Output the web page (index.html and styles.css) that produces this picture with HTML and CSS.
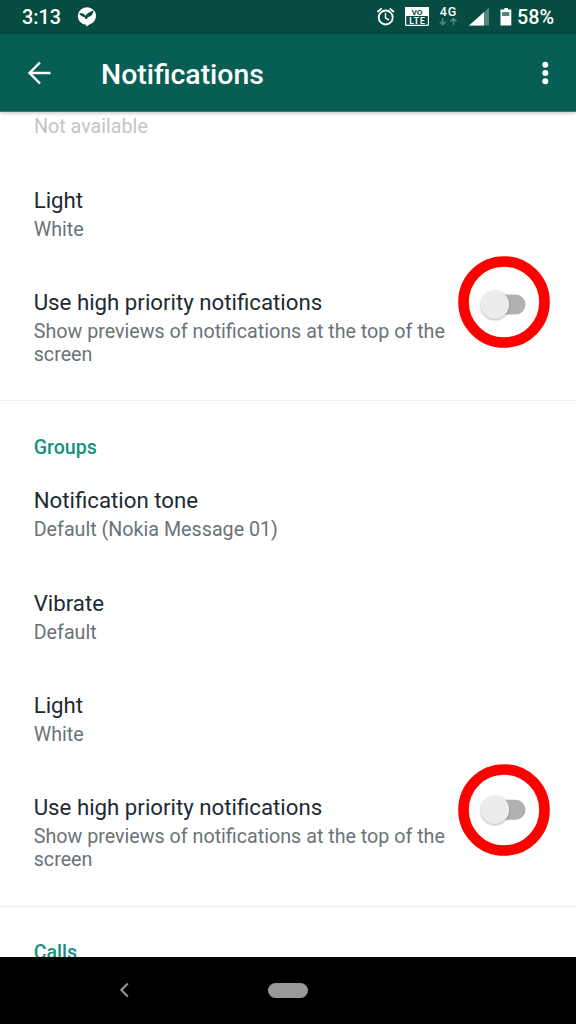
FILE: index.html
```html
<!DOCTYPE html>
<html lang="en">
<head>
<meta charset="utf-8">
<title>Notifications</title>
<link rel="stylesheet" href="styles.css">
</head>
<body>
<div class="screen">
  <header class="statusbar">
    <span class="clock">3:13</span>
    <svg class="bird" width="20" height="20" viewBox="0 0 20 20"><path fill="#fff" d="M9.700 0.300a9.100 8.700 0 0 1 3.500 16.800L9.700 19.500 8.500 17.600A9.100 8.700 0 0 1 9.700 .3z"/><path fill="#064c42" d="M2.300 6c3-.2 5 .9 6.200 2.700 1.500-2.300 4.200-4.100 8-5.200-.3 3.800-2.500 6-5 6.500-.9.300-1.300 1-1.500 1.900H8.300c-.1-1-.5-1.700-1.300-2C4.800 9.400 3 8.400 2.300 6z"/></svg>
    <svg class="icons" width="140" height="34" viewBox="0 0 140 34">
      <g fill="none" stroke="#fff" stroke-width="1.800"><circle cx="10.700" cy="17.500" r="7"/><path d="M10.500 13v5l3.700 2.200" stroke-width="1.500"/><path d="M2.400 12l4.300-3.600M14.700 8.400l4.300 3.600"/></g>
      <rect x="30.600" y="7.600" width="22.800" height="17.800" rx="1" fill="none" stroke="#fff" stroke-width="1.200"/>
      <path fill="#fff" d="M30 7h24v9H30z"/>
      <text class="tiny vo" x="42" y="14.800" textLength="11" lengthAdjust="spacingAndGlyphs">VO</text>
      <text class="tiny" x="42" y="24" textLength="15.500">LTE</text>
      <text class="network" x="73" y="16.300" textLength="16.500">4G</text>
      <path d="M67.700 18v6.500m-3-2.700 3 3 3-3M78.500 25.300v-6.500m-3 2.700 3-3 3 3" fill="none" stroke="#55857e" stroke-width="1.500"/>
      <path fill="#55857e" d="M114 7.800V25.500H94z"/><path fill="#fff" d="M109 12.200v13.300H94z"/>
      <path fill="#fff" d="M126 9.500h3.300V8h3.700v1.500h3.300V25.500H125.500V9.500z"/><path fill="#55857e" d="M127 12h7.300v4H127z"/>
    </svg>
    <span class="percent">58%</span>
  </header>
  <div class="toolbar">
    <svg width="24" height="24" viewBox="0 0 24 24"><path d="M23.500 12H2.500M13 1.500 2.500 12l10.500 10.500" fill="none" stroke="#fff" stroke-width="2.400"/></svg>
    <h1 class="heading">Notifications</h1>
    <svg class="more" width="8" height="24" viewBox="0 0 8 24" fill="#fff"><circle cx="4.300" cy="3.700" r="3"/><circle cx="4.300" cy="12" r="3"/><circle cx="4.300" cy="20.300" r="3"/></svg>
  </div>
  <main class="settings">
    <div class="sub unavailable">Not available</div>
    <section class="group first">
      <div class="row"><div class="title">Light</div><div class="sub">White</div></div>
      <div class="row wide"><div class="copy"><div class="title">Use high priority notifications</div><div class="sub">Show previews of notifications at the top of the screen</div></div>
        <svg class="switch" width="92" height="92" viewBox="0 0 92 92"><circle cx="46" cy="46" r="40.500" fill="none" stroke="#f00" stroke-width="10.600"/><rect x="28" y="38.600" width="39.500" height="20" rx="10" fill="#b1b1b1"/><circle class="thumb" cx="37" cy="48.700" r="14.200"/></svg></div>
    </section>
    <section class="group">
      <h2 class="section">Groups</h2>
      <div class="row"><div class="title">Notification tone</div><div class="sub">Default (Nokia Message 01)</div></div>
      <div class="row"><div class="title">Vibrate</div><div class="sub">Default</div></div>
      <div class="row"><div class="title">Light</div><div class="sub">White</div></div>
      <div class="row wide last"><div class="copy"><div class="title">Use high priority notifications</div><div class="sub">Show previews of notifications at the top of the screen</div></div>
        <svg class="switch lower" width="92" height="92" viewBox="0 0 92 92"><circle cx="46" cy="46" r="40.500" fill="none" stroke="#f00" stroke-width="10.600"/><rect x="28" y="35.800" width="39.500" height="20" rx="10" fill="#b1b1b1"/><circle class="thumb" cx="37" cy="45.800" r="14.200"/></svg></div>
    </section>
    <section class="group"><h2 class="section">Calls</h2></section>
  </main>
  <nav class="navbar">
    <svg width="10" height="16" viewBox="0 0 10 16"><path d="M8.800 1.500 2.300 8l6.500 6.500" fill="none" stroke="#999" stroke-width="2"/></svg>
    <span class="home"></span>
  </nav>
</div>
</body>
</html>
```
FILE: styles.css
```css
* { box-sizing: border-box; }
body { margin: 0; font-family: Roboto, sans-serif; background: #fff; }
svg { display: block; flex: none; }
h1, h2 { margin: 0; font-weight: 500; }
.screen { width: 576px; height: 1024px; display: flex; flex-direction: column; overflow: hidden; }
.statusbar { height: 34px; flex: none; background: #064c42; color: #fff; display: flex; align-items: center; padding-left: 22px; font-size: 19.800px; font-weight: 500; line-height: 34px; }
.clock { width: 55px; padding-top: 2px; }
.icons { margin-left: 278px; }
.percent { margin-left: 2px; padding-top: 2px; }
.tiny { font-size: 8.500px; font-weight: 700; fill: #fff; text-anchor: middle; }
.vo { font-size: 8px; fill: #064c42; }
.network { font-size: 12.500px; font-weight: 500; fill: #fff; text-anchor: middle; }
.toolbar { height: 78px; flex: none; background: #075e54; color: #fff; display: flex; align-items: center; padding: 0 27px; position: relative; z-index: 1; border-bottom: 1px solid #3c7b73; box-shadow: 0 1px 4px rgba(0,0,0,.25); }
.heading { font-size: 28.400px; line-height: 34px; margin-left: 50px; padding-top: 4px; }
.more { margin-left: auto; }
.settings { flex: 1; min-height: 0; overflow: hidden; }
.unavailable { padding: 3px 34px 0; height: 50px; }
.settings .unavailable { color: #c3c5c7; }
.group { border-bottom: 1px solid #eee; }
.first { height: 239px; }
.row { height: 102.500px; padding: 25px 34px 0 33.700px; }
.wide { height: 136px; display: flex; padding: 24.300px 0 0 33.700px; }
.copy { width: 424px; flex: none; }
.title { font-size: 22.260px; line-height: 26px; color: #1c2b33; }
.sub { font-size: 19.700px; line-height: 23px; color: #6a7378; }
.title + .sub { margin-top: 5px; }
.switch { margin-top: -32.600px; }
.lower { margin-top: -29.800px; }
.thumb { fill: #ececec; filter: drop-shadow(0 1px 1px rgba(0,0,0,.3)); }
.section { font-size: 19.600px; line-height: 23px; color: #17917f; height: 61px; padding: 34.500px 34px 0 33.700px; }
.navbar { height: 67px; flex: none; background: #000; display: flex; align-items: center; padding: 0 0 1px 119px; }
.home { width: 40px; height: 15px; border-radius: 8px; background: #999; margin-left: 139px; }
```
